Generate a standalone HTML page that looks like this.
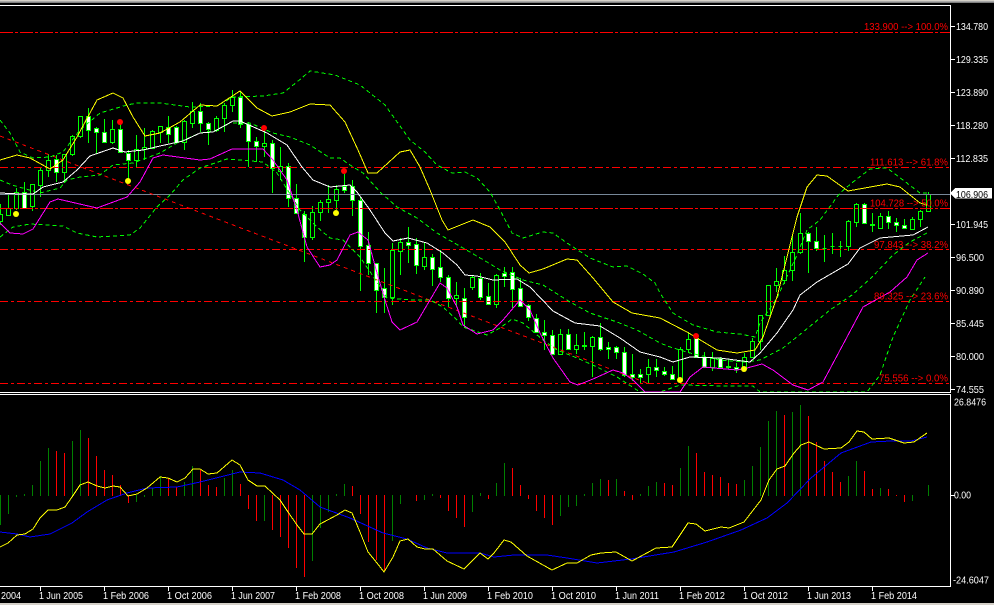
<!DOCTYPE html>
<html><head><meta charset="utf-8"><title>Chart</title>
<style>
html,body{margin:0;padding:0;background:#000;width:994px;height:605px;overflow:hidden}
svg{display:block}
text{font-family:"Liberation Sans",sans-serif;font-size:10.5px}
</style></head><body>
<svg width="994" height="605" viewBox="0 0 994 605" xmlns="http://www.w3.org/2000/svg">
<defs><clipPath id="m"><rect x="0" y="6" width="950" height="386"/></clipPath>
<clipPath id="s"><rect x="0" y="395" width="950" height="191"/></clipPath></defs>
<rect width="994" height="605" fill="#000"/>
<rect width="994" height="1" fill="#d4d0c8"/><rect y="1" width="994" height="1" fill="#a8a8a8"/><rect y="2" width="994" height="1" fill="#808080"/>
<rect y="603" width="994" height="2" fill="#d4d0c8"/>
<g shape-rendering="crispEdges">
<g clip-path="url(#m)">
<!-- wicks -->
<path fill="none" stroke="#0f0" d="M.5 204V225M8.5 195V216M16.5 188V210M24.5 182V208M32.5 184V211M40.5 167V197M48.5 154V177M56.5 155V182M64.5 154V183M72.5 135V156M80.5 116V138M88.5 108V143M96.5 127V154M104.5 119V142M112.5 120V144M120.5 122V153M128.5 150V180M136.5 135V167M144.5 128V160M152.5 130V149M160.5 126V143M168.5 116V143M176.5 126V143M184.5 120V150M192.5 102V128M200.5 103V132M208.5 122V145M216.5 116V132M224.5 103V132M232.5 90V112M240.5 92V128M248.5 122V167M256.5 137V162M264.5 128V157M272.5 140V193M280.5 147V180M288.5 163V207M296.5 184V213M304.5 211V262M312.5 206V240M320.5 200V221M328.5 185V213M336.5 185V210M344.5 174V193M352.5 180V216M360.5 197V291M368.5 232V275M376.5 263V313M384.5 268V313M392.5 243V305M400.5 238V275M408.5 227V263M416.5 238V274M424.5 243V270M432.5 254V286M440.5 250V282M448.5 275V307M456.5 282V307M464.5 288V327M472.5 275V290M480.5 273V300M488.5 283V304M496.5 274V308M504.5 267V287M512.5 267V308M520.5 278V307M528.5 304V321M536.5 314V333M544.5 320V350M552.5 330V354M560.5 329V355M568.5 329V350M576.5 334V354M584.5 332V350M592.5 336V377M600.5 323V351M608.5 342V359M616.5 346V359M624.5 347V377M632.5 354V381M640.5 369V383M648.5 359V383M656.5 359V377M664.5 367V376M672.5 366V380M680.5 347V382M688.5 332V353M696.5 336V357M704.5 352V368M712.5 352V371M720.5 357V368M728.5 359V369M736.5 363V373M744.5 353V369M752.5 338V358M760.5 315V350M768.5 285V316M776.5 268V292M784.5 256V284M792.5 236V281M800.5 213V254M808.5 232V273M816.5 227V251M824.5 235V262M832.5 233V254M840.5 241V257M848.5 220V251M856.5 203V227M864.5 203V224M872.5 213V232M880.5 213V229M888.5 211V229M896.5 218V232M904.5 219V229M912.5 217V229M920.5 210V227M928.5 192V212"/>
<!-- white bodies -->
<path fill="#fff" stroke="#0f0" d="M22.5 192.5h4V208.5h-4zM54.5 159.5h4V172.5h-4zM86.5 116.5h4V130.5h-4zM94.5 128.5h4V132.5h-4zM102.5 132.5h4V142.5h-4zM118.5 129.5h4V152.5h-4zM126.5 153.5h4V160.5h-4zM166.5 127.5h4V134.5h-4zM174.5 127.5h4V142.5h-4zM198.5 111.5h4V123.5h-4zM206.5 123.5h4V129.5h-4zM238.5 97.5h4V124.5h-4zM246.5 124.5h4V141.5h-4zM254.5 141.5h4V146.5h-4zM270.5 143.5h4V168.5h-4zM286.5 166.5h4V198.5h-4zM294.5 198.5h4V213.5h-4zM302.5 214.5h4V237.5h-4zM342.5 186.5h4V190.5h-4zM350.5 186.5h4V200.5h-4zM358.5 200.5h4V246.5h-4zM366.5 245.5h4V263.5h-4zM374.5 263.5h4V290.5h-4zM382.5 288.5h4V297.5h-4zM406.5 242.5h4V245.5h-4zM414.5 244.5h4V265.5h-4zM430.5 257.5h4V269.5h-4zM438.5 267.5h4V277.5h-4zM446.5 277.5h4V298.5h-4zM462.5 298.5h4V317.5h-4zM478.5 278.5h4V297.5h-4zM486.5 296.5h4V304.5h-4zM502.5 273.5h4V276.5h-4zM510.5 272.5h4V289.5h-4zM518.5 288.5h4V306.5h-4zM526.5 305.5h4V317.5h-4zM534.5 318.5h4V332.5h-4zM542.5 332.5h4V335.5h-4zM550.5 335.5h4V354.5h-4zM566.5 334.5h4V349.5h-4zM582.5 345.5h4V346.5h-4zM598.5 337.5h4V349.5h-4zM606.5 347.5h4V349.5h-4zM614.5 347.5h4V352.5h-4zM622.5 352.5h4V375.5h-4zM630.5 374.5h4V377.5h-4zM638.5 374.5h4V377.5h-4zM654.5 367.5h4V370.5h-4zM662.5 371.5h4V374.5h-4zM670.5 374.5h4V379.5h-4zM694.5 338.5h4V357.5h-4zM702.5 357.5h4V367.5h-4zM718.5 358.5h4V367.5h-4zM726.5 366.5h4V367.5h-4zM734.5 367.5h4V369.5h-4zM806.5 233.5h4V241.5h-4zM814.5 241.5h4V248.5h-4zM822.5 248.5h4V248.5h-4zM830.5 246.5h4V246.5h-4zM838.5 246.5h4V246.5h-4zM862.5 204.5h4V223.5h-4zM870.5 224.5h4V225.5h-4zM886.5 216.5h4V222.5h-4zM894.5 222.5h4V225.5h-4zM902.5 225.5h4V228.5h-4z"/>
<!-- black bodies -->
<path fill="#000" stroke="#0f0" d="M-1.5 214.5h4V221.5h-4zM6.5 208.5h4V215.5h-4zM14.5 192.5h4V208.5h-4zM30.5 184.5h4V206.5h-4zM38.5 170.5h4V185.5h-4zM46.5 160.5h4V170.5h-4zM62.5 154.5h4V172.5h-4zM70.5 136.5h4V154.5h-4zM78.5 116.5h4V136.5h-4zM110.5 129.5h4V142.5h-4zM134.5 149.5h4V160.5h-4zM142.5 147.5h4V149.5h-4zM150.5 131.5h4V148.5h-4zM158.5 126.5h4V132.5h-4zM182.5 121.5h4V142.5h-4zM190.5 111.5h4V123.5h-4zM214.5 118.5h4V130.5h-4zM222.5 105.5h4V118.5h-4zM230.5 97.5h4V105.5h-4zM262.5 143.5h4V146.5h-4zM278.5 166.5h4V171.5h-4zM310.5 212.5h4V237.5h-4zM318.5 202.5h4V212.5h-4zM326.5 199.5h4V202.5h-4zM334.5 189.5h4V200.5h-4zM390.5 250.5h4V297.5h-4zM398.5 242.5h4V251.5h-4zM422.5 257.5h4V266.5h-4zM454.5 295.5h4V298.5h-4zM470.5 277.5h4V287.5h-4zM494.5 275.5h4V304.5h-4zM558.5 334.5h4V354.5h-4zM574.5 345.5h4V349.5h-4zM590.5 337.5h4V346.5h-4zM646.5 367.5h4V374.5h-4zM678.5 349.5h4V380.5h-4zM686.5 339.5h4V349.5h-4zM710.5 358.5h4V367.5h-4zM742.5 357.5h4V367.5h-4zM750.5 341.5h4V357.5h-4zM758.5 315.5h4V341.5h-4zM766.5 285.5h4V315.5h-4zM774.5 281.5h4V285.5h-4zM782.5 270.5h4V280.5h-4zM790.5 252.5h4V270.5h-4zM798.5 233.5h4V252.5h-4zM846.5 221.5h4V246.5h-4zM854.5 204.5h4V222.5h-4zM878.5 216.5h4V228.5h-4zM910.5 219.5h4V229.5h-4zM918.5 211.5h4V219.5h-4zM926.5 194.5h4V211.5h-4z"/>
<!-- horizontal lines -->
<path stroke="#789" d="M0 194.5H950"/>
<g fill="none" stroke="#f00">
<path stroke-dasharray="8 3 3 3" d="M0 167.5H950M0 249.5H950M0 301.5H950M0 383.5H950"/>
<path stroke-dasharray="13 2 3 2" d="M0 32.5H950M0 208.5H950"/>
</g>
<path fill="none" stroke="#f00" stroke-dasharray="4 4" d="M0 136L647 383"/>
<!-- green dashed bands -->
<g fill="none" stroke="#0f0" stroke-dasharray="4 3">
<polyline points="0,120 10,133 20,152 33,158 50,157 63,152 80,130 100,113 127,105 137,103 160,103 190,107 217,106 233,97 263,96 283,93 297,82 310,71 335,75 360,85 385,105 410,140 425,152 437,165 452,173 465,172 477,178 490,192 500,210 512,233 523,238 543,232 553,233 567,243 590,258 613,267 627,266 643,274 655,283 660,293 673,313 693,325 717,332 740,334 755,337 760,323 777,298 797,255 807,230 820,220 840,193 853,182 870,169 887,168 903,180 920,193 927,193"/>
<polyline points="0,180 12,185 40,193 60,188 67,180 80,177 100,175 113,165 133,163 160,153 177,143 200,133 217,130 230,123 250,123 273,133 290,137 310,145 330,158 340,158 350,165 363,173 380,192 397,207 417,218 437,233 463,248 487,262 500,270 523,280 543,285 570,302 590,313 617,322 637,330 660,343 670,347 690,353 720,360 745,362 760,360 783,348 803,332 830,310 852,295 872,277 893,255 910,242 927,233"/>
<polyline points="0,237 13,227 30,224 63,226 77,233 97,237 130,235 140,228 157,207 170,195 183,180 200,168 227,159 263,162 277,173 300,210 317,227 330,238 343,240 360,257 377,282 387,298 413,300 430,300 443,307 457,320 463,327 487,335 500,328 512,319 523,323 543,340 557,350 577,358 597,367 617,377 640,392 660,392 680,385 727,386 753,386 760,392 867,392 880,375 893,337 910,300 925,277"/>
</g>
<!-- magenta -->
<polyline fill="none" stroke="#f0f" points="0,223 10,233 23,234 33,229 50,202 58,199 97,208 127,197 140,182 153,158 163,155 200,160 210,159 232,149 263,149 273,160 287,180 297,210 307,247 320,267 330,265 337,260 350,235 358,232 368,240 377,273 385,300 392,322 400,330 417,322 440,283 447,288 457,307 463,325 477,334 493,330 503,320 520,300 530,310 540,333 553,358 570,382 578,385 593,379 613,370 623,373 633,380 645,392 680,392 690,377 703,367 737,370 747,368 762,364 773,370 793,385 808,390 823,382 863,307 890,292 907,277 917,260 928,253"/>
<!-- white -->
<polyline fill="none" stroke="#fff" points="0,193 20,194 33,194 43,187 63,182 77,170 90,156 113,148 125,152 143,150 160,146 183,141 200,133 213,132 233,121 240,121 267,133 287,145 302,167 313,180 330,187 350,185 357,192 370,210 385,233 393,241 408,238 427,243 443,253 457,265 465,275 477,276 493,280 517,279 530,287 553,311 575,323 600,326 620,338 640,352 660,357 673,362 690,357 720,358 750,362 760,353 777,333 793,310 800,295 817,282 848,264 860,248 880,238 913,235 928,227"/>
<!-- yellow -->
<polyline fill="none" stroke="#ff0" points="0,160 17,155 30,158 50,169 63,160 77,137 97,100 113,93 123,98 133,117 145,136 160,133 180,122 200,105 217,106 240,91 257,108 272,116 290,112 310,104 330,105 345,122 358,150 368,173 377,173 400,152 410,150 420,167 430,190 442,220 448,230 473,220 490,227 505,242 520,265 529,273 543,269 567,259 577,260 593,278 613,302 632,313 660,318 687,332 717,350 737,353 755,350 763,337 777,297 797,217 807,187 817,175 827,176 848,191 887,184 900,187 920,203 927,205"/>
</g>
<!-- sub window -->
<g clip-path="url(#s)">
<path fill="none" stroke="#008000" d="M.5 495V525M8.5 495V514M16.5 495V497M24.5 496V494M32.5 496V485M40.5 496V461M48.5 496V448M72.5 496V441M80.5 496V430M136.5 495V502M144.5 495V497M152.5 496V488M160.5 496V476M184.5 496V482M192.5 496V466M224.5 496V478M232.5 496V470M264.5 495V521M312.5 495V561M320.5 495V528M328.5 495V512M336.5 496V494M344.5 496V484M392.5 495V541M400.5 495V504M424.5 495V500M432.5 496V494M472.5 495V512M480.5 496V493M496.5 496V483M504.5 496V463M560.5 495V516M568.5 495V507M576.5 495V506M584.5 496V494M592.5 496V483M600.5 496V479M616.5 496V479M640.5 496V494M648.5 496V486M656.5 496V482M680.5 496V468M688.5 496V446M744.5 496V480M752.5 496V466M760.5 496V447M768.5 496V421M776.5 496V411M792.5 496V412M800.5 496V405M848.5 496V476M856.5 496V461M880.5 496V488M912.5 495V501M928.5 496V485"/>
<path fill="none" stroke="#f00" d="M56.5 496V451M64.5 496V453M88.5 496V438M96.5 496V456M104.5 496V470M112.5 496V475M120.5 496V485M128.5 495V503M168.5 496V478M176.5 496V487M200.5 496V470M208.5 496V485M216.5 496V487M240.5 496V484M248.5 495V509M256.5 495V521M272.5 495V530M280.5 495V537M288.5 495V548M296.5 495V568M304.5 495V577M352.5 496V486M360.5 495V514M368.5 495V542M376.5 495V560M384.5 495V571M416.5 495V501M440.5 495V498M448.5 495V511M456.5 495V518M464.5 495V527M488.5 495V499M512.5 496V468M520.5 496V485M528.5 495V499M536.5 495V511M544.5 495V518M552.5 495V525M608.5 496V480M624.5 496V491M632.5 495V500M664.5 496V483M672.5 496V485M696.5 496V453M704.5 496V472M712.5 496V475M720.5 496V477M728.5 496V483M736.5 496V484M784.5 496V415M808.5 496V416M816.5 496V442M824.5 496V461M832.5 496V472M840.5 496V482M864.5 496V471M872.5 496V489M888.5 496V489M896.5 495V496M904.5 495V502"/>
<polyline fill="none" stroke="#00f" points="0,532 17,534 30,537 50,534 72,523 87,512 107,500 127,493 147,488 177,487 200,482 220,477 240,472 260,473 283,480 300,490 320,507 350,518 383,533 407,539 427,548 447,553 480,553 494,557 514,555 547,555 567,558 597,563 631,559 674,552 707,542 741,530 767,518 787,503 811,478 841,453 871,442 891,441 911,441 927,437"/>
<polyline fill="none" stroke="#ff0" points="0,547 8,543 17,535 25,534 33,529 40,518 48,510 57,510 65,507 72,497 80,485 88,482 97,486 105,488 113,486 120,487 128,496 137,494 147,488 160,477 168,478 177,482 185,478 193,469 200,469 208,474 217,473 232,460 240,465 248,480 257,486 265,486 280,500 288,512 297,525 304,534 312,534 320,524 337,515 345,510 352,513 360,532 368,552 377,563 384,572 393,557 400,541 408,539 417,547 425,549 433,549 447,561 464,569 480,553 488,559 494,553 504,540 511,542 527,556 552,570 567,563 577,563 591,555 601,553 616,552 632,561 656,548 672,547 688,523 696,524 705,531 721,527 729,528 744,522 761,500 769,480 777,469 785,466 794,453 801,445 809,442 824,449 841,448 849,442 857,431 864,432 872,439 889,438 904,443 914,442 927,433"/>
</g>
<!-- frames -->
<path fill="none" stroke="#fff" d="M0 5.5H950.5V392.5H0M0 394.5H950.5V586.5H0"/>
<path stroke="#fff" d="M951 26.5h4M951 59.5h4M951 92.5h4M951 125.5h4M951 158.5h4M951 224.5h4M951 257.5h4M951 290.5h4M951 323.5h4M951 356.5h4M951 389.5h4M951 495.5h4M40.5 587v4M104.5 587v4M168.5 587v4M232.5 587v4M296.5 587v4M360.5 587v4M424.5 587v4M488.5 587v4M552.5 587v4M616.5 587v4M680.5 587v4M744.5 587v4M808.5 587v4M872.5 587v4"/>
<path fill="#fff" d="M950 193.5L955 188H992V198.5H955Z"/>
</g>
<!-- dots -->
<g fill="#ff0"><circle cx="16" cy="214" r="3"/><circle cx="128" cy="181" r="3"/><circle cx="336" cy="213" r="3"/><circle cx="680" cy="380" r="3"/><circle cx="744" cy="369" r="3"/></g>
<g fill="#f00"><circle cx="120" cy="122" r="3"/><circle cx="264" cy="128" r="3"/><circle cx="344" cy="171" r="3"/><circle cx="696" cy="336" r="3"/></g>
<!-- fib labels -->
<g fill="#f00">
<text x="864" y="30" textLength="84" lengthAdjust="spacingAndGlyphs">133.900 --&gt; 100.0%</text>
<text x="870" y="165.5" textLength="78" lengthAdjust="spacingAndGlyphs">111.613 --&gt; 61.8%</text>
<text x="870" y="206.5" textLength="78" lengthAdjust="spacingAndGlyphs">104.728 --&gt; 50.0%</text>
<text x="874" y="248" textLength="74" lengthAdjust="spacingAndGlyphs">97.843 --&gt; 38.2%</text>
<text x="874" y="299.5" textLength="74" lengthAdjust="spacingAndGlyphs">89.325 --&gt; 23.6%</text>
<text x="879" y="381.5" textLength="69" lengthAdjust="spacingAndGlyphs">75.556 --&gt; 0.0%</text>
</g>
<!-- price axis -->
<g fill="#fff">
<text x="956" y="30" textLength="32" lengthAdjust="spacingAndGlyphs">134.780</text>
<text x="956" y="63" textLength="32" lengthAdjust="spacingAndGlyphs">129.335</text>
<text x="956" y="96" textLength="32" lengthAdjust="spacingAndGlyphs">123.890</text>
<text x="956" y="129" textLength="32" lengthAdjust="spacingAndGlyphs">118.280</text>
<text x="956" y="162" textLength="32" lengthAdjust="spacingAndGlyphs">112.835</text>
<text x="956" y="228" textLength="32" lengthAdjust="spacingAndGlyphs">101.945</text>
<text x="956" y="261" textLength="28" lengthAdjust="spacingAndGlyphs">96.500</text>
<text x="956" y="294" textLength="28" lengthAdjust="spacingAndGlyphs">90.890</text>
<text x="956" y="327" textLength="28" lengthAdjust="spacingAndGlyphs">85.445</text>
<text x="956" y="360" textLength="28" lengthAdjust="spacingAndGlyphs">80.000</text>
<text x="956" y="393" textLength="28" lengthAdjust="spacingAndGlyphs">74.555</text>
<text x="954" y="405.5" textLength="32" lengthAdjust="spacingAndGlyphs">26.8476</text>
<text x="954" y="498.5" textLength="17" lengthAdjust="spacingAndGlyphs">0.00</text>
<text x="953" y="583.5" textLength="36" lengthAdjust="spacingAndGlyphs">-24.6047</text>
</g>
<text x="956" y="198" textLength="32" lengthAdjust="spacingAndGlyphs" fill="#000">106.906</text>
<!-- date axis -->
<g fill="#fff">
<text x="1" y="599" textLength="20" lengthAdjust="spacingAndGlyphs">2004</text>
<text x="39" y="599" textLength="44" lengthAdjust="spacingAndGlyphs">1 Jun 2005</text>
<text x="103" y="599" textLength="46" lengthAdjust="spacingAndGlyphs">1 Feb 2006</text>
<text x="167" y="599" textLength="45" lengthAdjust="spacingAndGlyphs">1 Oct 2006</text>
<text x="231" y="599" textLength="44" lengthAdjust="spacingAndGlyphs">1 Jun 2007</text>
<text x="295" y="599" textLength="46" lengthAdjust="spacingAndGlyphs">1 Feb 2008</text>
<text x="359" y="599" textLength="45" lengthAdjust="spacingAndGlyphs">1 Oct 2008</text>
<text x="423" y="599" textLength="44" lengthAdjust="spacingAndGlyphs">1 Jun 2009</text>
<text x="487" y="599" textLength="46" lengthAdjust="spacingAndGlyphs">1 Feb 2010</text>
<text x="551" y="599" textLength="45" lengthAdjust="spacingAndGlyphs">1 Oct 2010</text>
<text x="615" y="599" textLength="44" lengthAdjust="spacingAndGlyphs">1 Jun 2011</text>
<text x="679" y="599" textLength="46" lengthAdjust="spacingAndGlyphs">1 Feb 2012</text>
<text x="743" y="599" textLength="45" lengthAdjust="spacingAndGlyphs">1 Oct 2012</text>
<text x="807" y="599" textLength="44" lengthAdjust="spacingAndGlyphs">1 Jun 2013</text>
<text x="871" y="599" textLength="46" lengthAdjust="spacingAndGlyphs">1 Feb 2014</text>
</g>
</svg>
</body></html>
